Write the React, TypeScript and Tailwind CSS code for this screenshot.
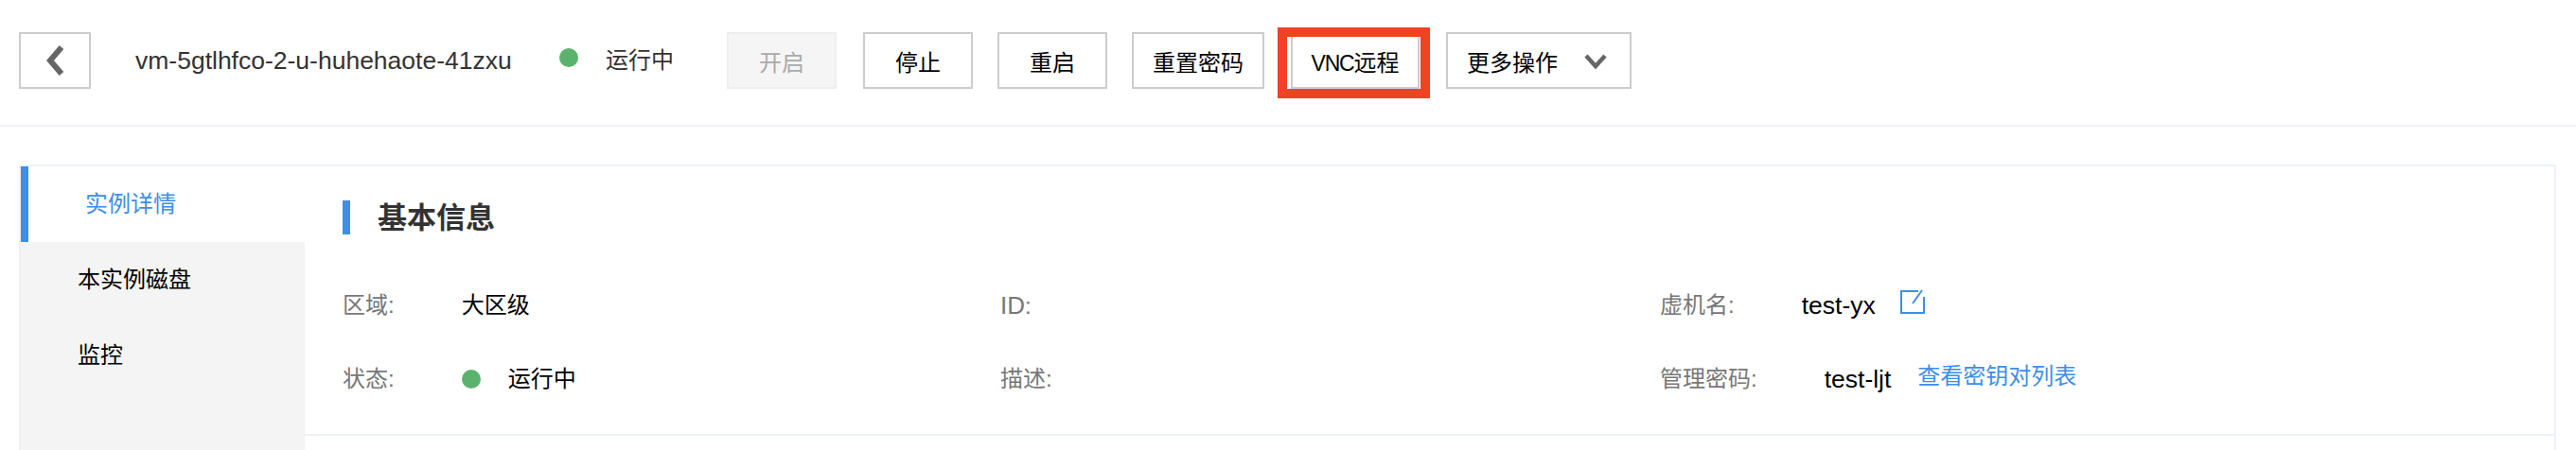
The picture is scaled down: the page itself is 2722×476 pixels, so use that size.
const cjk = "font-['Liberation_Sans','Noto_Sans_CJK_SC',sans-serif]";

function ToolButton({ label, className = '' }: { label: React.ReactNode; className?: string }) {
  return (
    <button className={`flex h-[60px] items-center justify-center border-2 border-[#cccccc] bg-white pt-1.5 text-[24px] leading-none text-black ${className}`}>
      {label}
    </button>
  );
}

function Field({ label, children }: { label: React.ReactNode; children?: React.ReactNode }) {
  return (
    <div className="flex h-[78px] items-center text-[24px] leading-none">
      <span className="text-[#777777]">{label}:</span>
      <div className="ml-[71px] flex items-center text-black">{children}</div>
    </div>
  );
}

export default function App() {
  return (
    <div className={`h-[476px] w-[2722px] overflow-hidden bg-white ${cjk}`}>
      {/* Toolbar */}
      <div className="flex h-[134px] items-start border-b-2 border-[#eef0f8] pl-5 pt-[34px]">
        <button className="flex h-[60px] w-[76px] items-center justify-center border-2 border-[#cccccc] bg-white">
          <svg width="22" height="32" viewBox="0 0 22 32" fill="none">
            <polyline points="18,2 6,16 18,30" stroke="#666666" strokeWidth="6" />
          </svg>
        </button>
        <span className="ml-[47px] mt-3.5 w-[398px] text-[26.5px] leading-[32px] text-[#333333]">vm-5gtlhfco-2-u-huhehaote-41zxu</span>
        <span className="ml-[50px] mt-[17px] h-5 w-5 rounded-full bg-[#5bb26d]" />
        <span className="ml-[29px] mt-3.5 text-[24px] leading-[32px] text-[#333333]">运行中</span>
        <button className="ml-14 flex h-[60px] w-[116px] items-center justify-center border-2 border-[#eeeeee] bg-[#f5f5f5] pt-1.5 text-[24px] leading-none text-[#aaaaaa]">
          开启
        </button>
        <ToolButton label="停止" className="ml-7 w-[116px]" />
        <ToolButton label="重启" className="ml-[26px] w-[116px]" />
        <ToolButton label="重置密码" className="ml-[26px] w-[140px]" />
        <div className="relative ml-7">
          <ToolButton
            label={
              <>
                <span className="text-[23px] tracking-[-1.2px]">VNC</span>远程
              </>
            }
            className="w-[136px]"
          />
          <div className="absolute -left-3.5 -right-[11px] -bottom-2.5 top-[-5px] border-x-[10px] border-y-[10px] border-[#ee4327]" />
        </div>
        <button className="ml-7 flex h-[60px] w-[196px] items-center border-2 border-[#cccccc] bg-white pl-5 pt-1.5 text-[24px] leading-none text-black">
          更多操作
          <svg className="ml-7 -mt-1" width="24" height="16" viewBox="0 0 24 16" fill="none">
            <polyline points="2,2 12,13 22,2" stroke="#666666" strokeWidth="4.5" />
          </svg>
        </button>
      </div>

      {/* Panel */}
      <div className="ml-5 mr-[21px] mt-10 flex h-[320px] border-x-2 border-t-2 border-[#eef1f6]">
        <nav className="flex w-[300px] flex-col">
          <div className="flex h-20 items-center border-l-8 border-[#3d8ee8] pl-[60px] text-[24px] leading-none text-[#3d8ee8]">实例详情</div>
          <div className="flex-1 bg-[#f4f4f4] text-[24px] leading-none text-black">
            <div className="flex h-20 items-center pl-[60px]">本实例磁盘</div>
            <div className="flex h-20 items-center pl-[60px]">监控</div>
          </div>
        </nav>
        <div className="h-[285px] flex-1 border-b-2 border-[#eef1f6] pl-10">
          <div className="mt-9 flex h-9 items-center">
            <span className="h-9 w-2 bg-[#3d8ee8]" />
            <h2 className="ml-[29px] text-[31px] font-bold leading-none text-[#333333]">基本信息</h2>
          </div>
          <div className="mt-9 grid grid-cols-[695px_697px_1fr]">
            <Field label="区域"><span>大区级</span></Field>
            <Field label={<span className="text-[26px]">ID</span>} />
            <Field label="虚机名">
              <span className="text-[26.5px]">test-yx</span>
              <svg className="ml-[26px] -mt-2" width="26" height="26" viewBox="0 0 26 26" fill="none">
                <path d="M19 2H1v23h24V8" stroke="#3d8ee8" strokeWidth="2" />
                <path d="M13 15L23 1" stroke="#3d8ee8" strokeWidth="2" />
              </svg>
            </Field>
            <Field label="状态">
              <span className="h-5 w-5 rounded-full bg-[#5bb26d]" />
              <span className="ml-[29px]">运行中</span>
            </Field>
            <Field label="描述" />
            <Field label="管理密码">
              <span className="text-[26.5px]">test-ljt</span>
              <a className="ml-7 -mt-1.5 text-[#3d8ee8]">查看密钥对列表</a>
            </Field>
          </div>
        </div>
      </div>
    </div>
  );
}
